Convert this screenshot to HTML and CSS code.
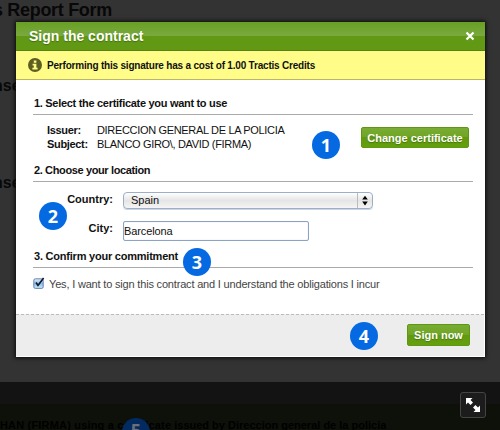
FILE: index.html
```
<!DOCTYPE html>
<html lang="en">
<head>
<meta charset="utf-8">
<title>Sign the contract</title>
<link rel="stylesheet" href="styles.css">
</head>
<body>
<div class="page">
  <div class="backdrop-text report-title">s Report Form</div>
  <div class="backdrop-text consent-one">nse</div>
  <div class="backdrop-text consent-two">nse</div>
  <section class="modal">
    <header class="modal-header"><h1>Sign the contract</h1>
      <svg class="close" viewBox="0 0 10 10"><path d="M1.5 1.5 8.5 8.5M8.5 1.5 1.5 8.5"/></svg>
    </header>
    <div class="notice">
      <svg class="info" viewBox="0 0 14 14"><circle cx="7" cy="7" r="7" fill="#5f5e22"/><path d="M5.8 2.5h2.6v2.2H5.8zM4.6 5.8h3.8v4h1.2v1.6H4.4V9.8h1.4V7.4H4.6z" fill="#fffd88"/></svg>
      <span>Performing this signature has a cost of 1.00 Tractis Credits</span>
    </div>
    <div class="content">
      <h2 class="h-one"><span>1. Select the certificate you want to use</span></h2>
      <div class="certificate">
        <dl>
          <dt>Issuer:</dt><dd class="issuer">DIRECCION GENERAL DE LA POLICIA</dd>
          <dt class="subject-label">Subject:</dt><dd class="subject">BLANCO GIRO\, DAVID (FIRMA)</dd>
        </dl>
        <button class="btn change">Change certificate</button>
      </div>
      <h2 class="h-two"><span>2. Choose your location</span></h2>
      <div class="location">
        <label class="country">Country:</label>
        <div class="select"><span>Spain</span><svg viewBox="0 0 14 16"><path d="M7 2.8 10 7H4zM7 13.2 10 9H4z"/></svg></div>
        <label class="city">City:</label>
        <div class="input">Barcelona</div>
      </div>
      <h2 class="h-three"><span>3. Confirm your commitment</span></h2>
      <div class="agree">
        <svg class="check" viewBox="0 0 12 13"><defs><linearGradient id="aqua" x2="0" y2="1"><stop stop-color="#e2effb"/><stop offset=".5" stop-color="#8dbbea"/><stop offset="1" stop-color="#c6effd"/></linearGradient></defs><rect x=".8" y="1.8" width="9.4" height="9.6" rx="1.5" fill="url(#aqua)" stroke="#5979a5" stroke-width=".9"/><path d="M3 5.5 5 8.4 10.6 1" fill="none" stroke="#101827" stroke-width="1.7"/></svg>
        <span>Yes, I want to sign this contract and I understand the obligations I incur</span>
      </div>
    </div>
    <footer class="modal-footer"><button class="btn sign">Sign now</button></footer>
  </section>
  <div class="caption"><span class="cap-left">HAN (FIRMA) using a certificate</span><span class="cap-right">issued by Direccion general de la policia</span></div>
  <div class="expand"><svg viewBox="0 0 24 24"><path d="M5 5h6.500l-2 2 2.500 2.500-2.500 2.500L7 9.500l-2 2zM19 19h-6.500l2-2-2.500-2.500 2.500-2.500L17 14.500l2-2z"/></svg></div>
  <div class="badge one">1</div><div class="badge two">2</div><div class="badge three">3</div><div class="badge four">4</div><div class="badge five">5</div>
</div>
</body>
</html>
```
FILE: styles.css
```
* { box-sizing: border-box; }
body { margin: 0; font-family: "Liberation Sans", Arial, sans-serif; font-size: 11px; color: #111; }
.page { position: relative; width: 500px; height: 430px; overflow: hidden; background: #333; padding: 22px 0 0 16px; }
.backdrop-text { position: absolute; font-weight: bold; color: #080808; white-space: nowrap; line-height: 20px; font-size: 16px; }
.report-title { left: -7px; top: 0; font-size: 18px; letter-spacing: -.32px; }
.consent-one { left: -7px; top: 76px; }
.consent-two { left: -7px; top: 173px; }
.modal { position: relative; width: 469px; height: 335px; background: #fff; box-shadow: 0 0 4px 1px #0b0b0b; display: flex; flex-direction: column; white-space: nowrap; }
.modal-header { height: 29px; display: flex; align-items: center; justify-content: space-between; padding: 0 10px 0 13px; background: linear-gradient(#689f24, #7aa93f 14px, #619914 14px, #619914); border-bottom: 1px solid #568315; }
h1 { margin: 0; color: #fff; font-size: 14px; line-height: 16px; text-shadow: 0 1px 1px #44700c; }
.close { width: 10px; height: 10px; fill: none; stroke: #fff; stroke-width: 2.2; }
.notice { height: 29px; background: #fffd88; border-bottom: 1px solid #b9b765; display: flex; align-items: center; gap: 5px; padding-left: 12px; font-weight: bold; font-size: 10px; letter-spacing: -.2px; }
.info { width: 14px; height: 14px; }
.content { height: 234px; padding: 0 12px 0 17px; }
h2 { margin: 0; display: flex; align-items: flex-end; font-size: 11px; line-height: 13px; padding: 0 0 4px 1px; border-bottom: 1px solid #aaa; letter-spacing: -.3px; }
.h-one { height: 35px; }
.certificate { height: 49px; display: flex; justify-content: space-between; padding: 8px 4px 0 14px; }
dl { margin: 0; display: grid; grid-template-columns: 50px auto; grid-auto-rows: 14px; line-height: 14px; letter-spacing: -.33px; }
dt { font-weight: bold; }
dd { margin: 0; }
.btn { border: 1px solid #5f9614; border-radius: 2px; color: #fff; font: bold 12px/18px "Liberation Sans", Arial, sans-serif; padding: 0; background: linear-gradient(#79ac35, #6fa522 50%, #629910 50%, #64a00c); text-shadow: 0 1px 1px #48750f; white-space: nowrap; }
.change { width: 108px; height: 21px; margin: 4px 0 0 0; font-size: 11px; }
.h-two { height: 18px; letter-spacing: -.37px; }
.location { height: 68px; display: grid; grid-template-columns: 80px 250px; column-gap: 10px; grid-template-rows: 17px 20px; row-gap: 12px; padding-top: 10px; }
.location label { text-align: right; font-weight: bold; font-size: 11px; line-height: 14px; }
.select { display: flex; justify-content: space-between; border: 1px solid #9bafcb; border-radius: 4px; background: linear-gradient(#fff, #e5e5e5 50%, #f5f5f5); line-height: 15px; padding-left: 7px; font-size: 11px; box-shadow: 0 1px 0 #ccd5e0; }
.select svg { width: 15px; height: 15px; border-left: 1px solid #bbb; }
.input { width: 186px; height: 20px; border: 1px solid #8aa4c6; border-radius: 2px; box-shadow: inset 0 0 1px #a9bddb; line-height: 18px; padding-left: 0; letter-spacing: -.1px; }
.h-three { height: 18px; letter-spacing: -.22px; }
.agree { display: flex; gap: 4px; padding-top: 9px; color: #444; line-height: 14px; letter-spacing: -.18px; }
.check { width: 12px; height: 13px; }
.modal-footer { height: 43px; background: #ededed; border-right: 1px solid #fff; border-bottom: 1px solid #fff; display: flex; justify-content: flex-end; padding: 10px 14px 0 0; background-image: repeating-linear-gradient(90deg, #bbb 0 3px, #eee 3px 5px); background-size: 100% 1px; background-repeat: no-repeat; }
.sign { width: 63px; height: 22px; font-size: 11px; }
.caption { position: absolute; left: 0; top: 382px; width: 500px; height: 48px; background: linear-gradient(#131313 22px, #0e100a 22px); color: #000; font-weight: bold; font-size: 11px; display: flex; gap: 3px; padding-top: 37px; line-height: 13px; white-space: nowrap; }
.cap-left { letter-spacing: .18px; }
.expand { position: absolute; left: 460px; top: 392px; width: 26px; height: 26px; border: 1px solid #444; border-radius: 3px; background: #1c1c1c; }
.expand svg { display: block; width: 24px; height: 24px; fill: #fff; }
.badge { position: absolute; width: 28px; height: 28px; border-radius: 50%; background: #0569e2; color: #fff; text-align: center; font: bold 18px/28px "Open Sans", sans-serif; }
.one { left: 312px; top: 131px; }
.two { left: 39px; top: 202px; }
.three { left: 183px; top: 248px; }
.four { left: 350px; top: 322px; }
.five { left: 122px; top: 418px; background: #032b60; color: #697077; line-height: 24px; }
```
